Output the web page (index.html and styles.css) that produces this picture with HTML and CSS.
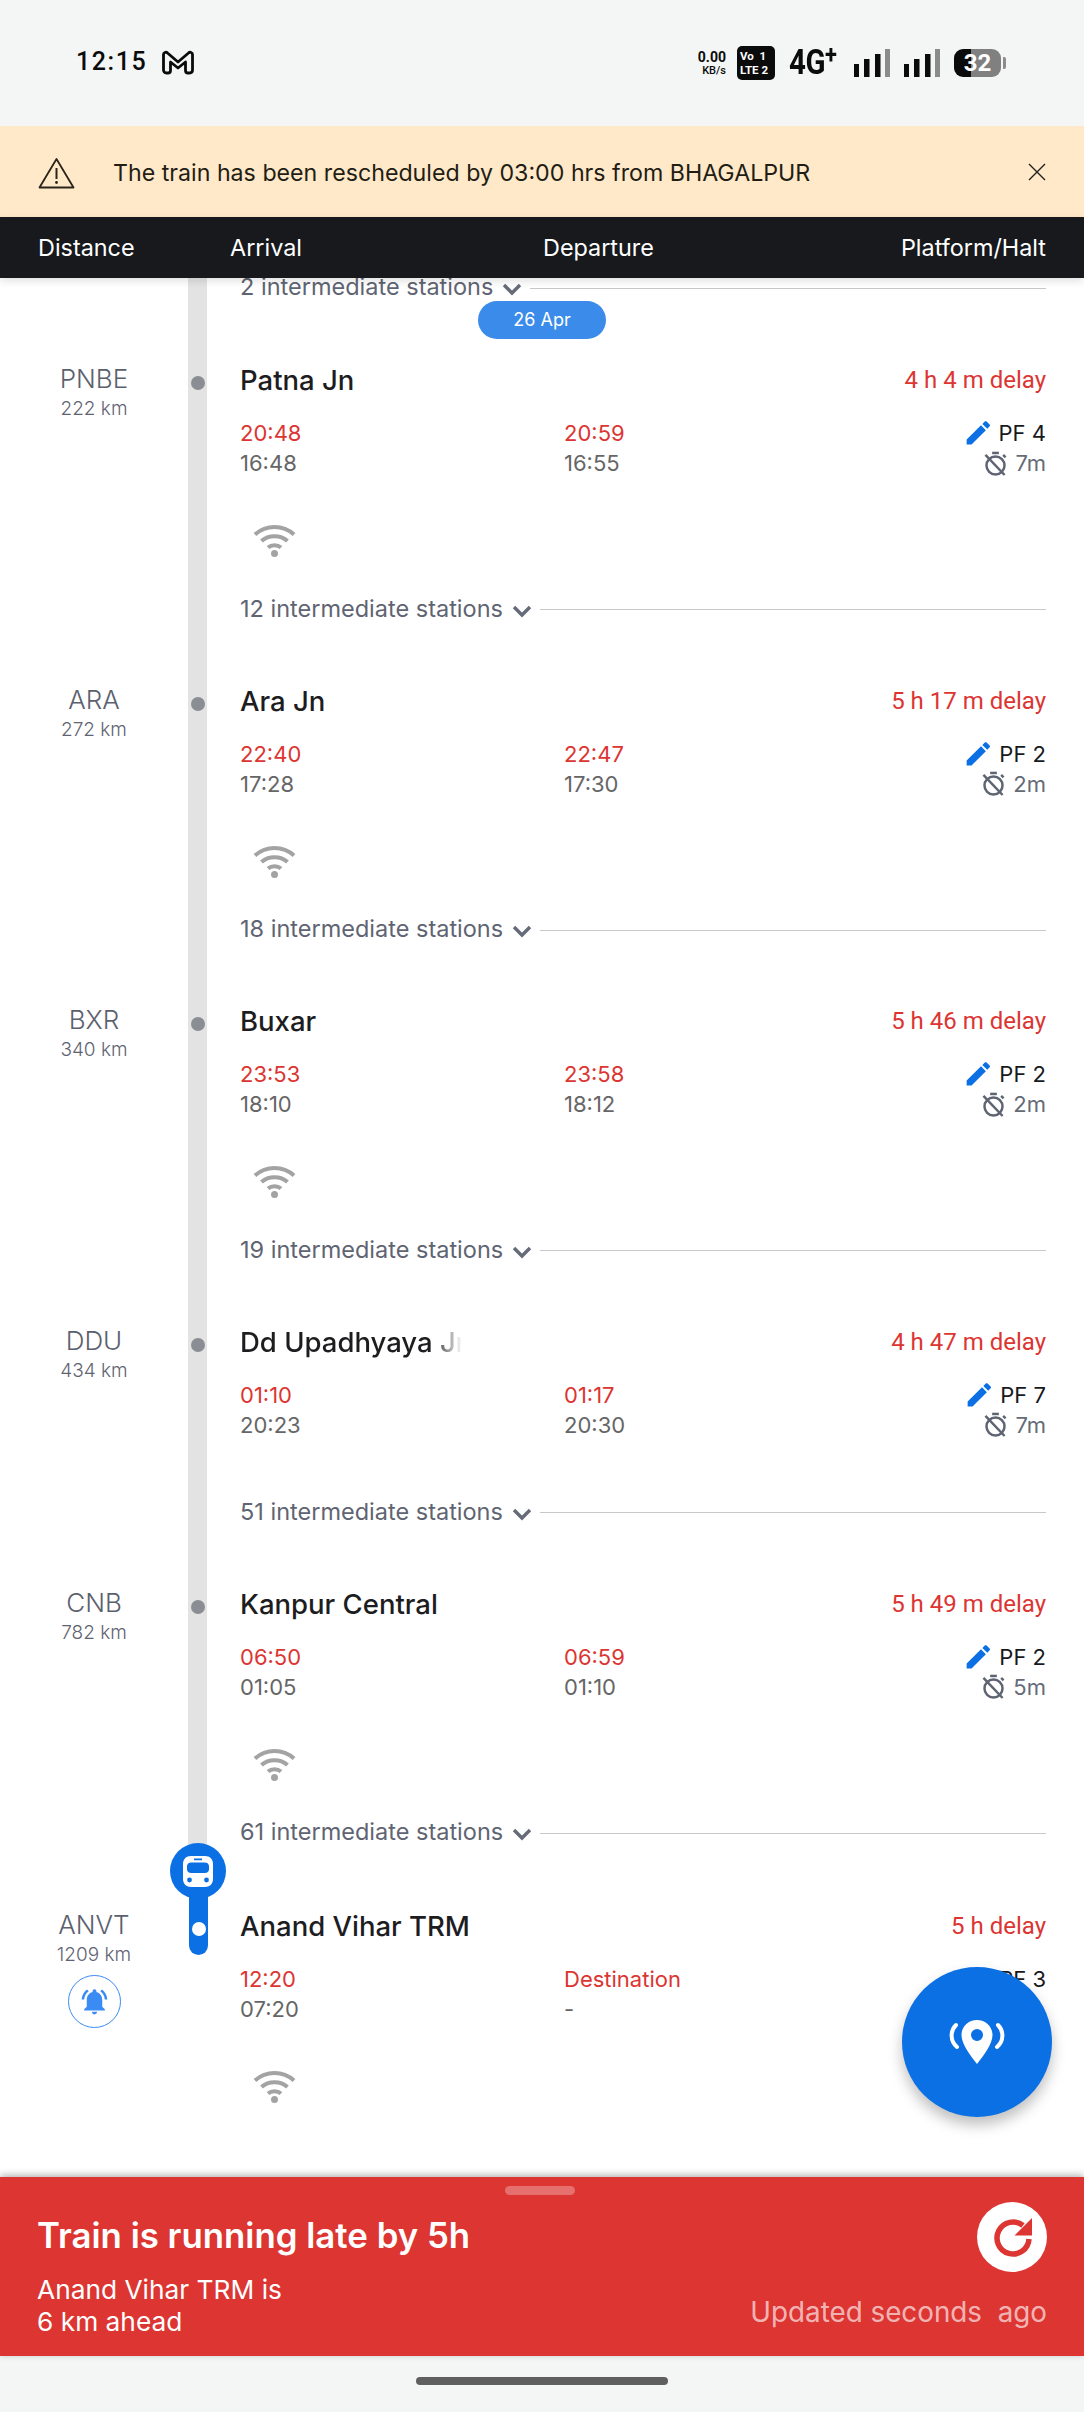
FILE: index.html
```html
<!DOCTYPE html>
<html lang="en">
<head>
<meta charset="utf-8">
<title>Train running status</title>
<link rel="stylesheet" href="styles.css">
</head>
<body>
<div class="app">
  <svg width="0" height="0" class="defs" aria-hidden="true">
    <defs>
      <symbol id="wifi" viewBox="0 0 43 33">
        <g fill="none" stroke="#a3a3a3" stroke-width="4">
          <path d="M2 10.5C13 0.5 30 0.5 41 10.5"/>
          <path d="M8.5 17C15.5 10.5 27.5 10.5 34.5 17"/>
          <path d="M15 23.5C18.5 20.5 24.5 20.5 28 23.5"/>
        </g>
        <circle cx="21.5" cy="29.5" r="3.5" fill="#a3a3a3"/>
      </symbol>
      <symbol id="chev" viewBox="0 0 20 14">
        <path d="M2 3l8 8 8-8" fill="none" stroke="#666b78" stroke-width="3.4"/>
      </symbol>
      <symbol id="pencil" viewBox="2.5 2.9 18.5 18.5">
        <path fill="#0a70e4" d="M3 17.25V21h3.75L17.81 9.94l-3.75-3.75L3 17.25zM20.71 7.04c.39-.39.39-1.02 0-1.41l-2.34-2.34c-.39-.39-1.02-.39-1.41 0l-1.83 1.83 3.75 3.75 1.83-1.83z"/>
      </symbol>
      <symbol id="timer" viewBox="0 0 24 26">
        <g fill="none" stroke="#5f6472" stroke-width="2.6">
          <circle cx="12" cy="15" r="9.4"/>
          <path d="M8.5 2h7"/>
          <path d="M1.5 4l20 21"/>
          <path d="M20 4l2.5 2.5"/>
        </g>
      </symbol>
    </defs>
  </svg>

  <header class="status">
    <div class="status-left">
      <span class="clock">12:15</span>
      <svg class="gmail" viewBox="0 0 33 25" width="34" height="25"><path d="M2 4.5C2 2.5 4.5 1.500 6 3l10.500 9L27 3c1.500-1.500 4-.5 4 1.500V20c0 1.500-1 3-3 3h-1.500c-1.500 0-2.500-1-2.500-2.500V12l-7.500 6-7.500-6v8.500C9 22 8 23 6.500 23H5c-2 0-3-1.500-3-3z" fill="#f4f6f5" stroke="#0b0b0b" stroke-width="2.800" stroke-linejoin="round"/></svg>
    </div>
    <div class="status-right">
      <div class="speed"><span class="speed-num">0.00</span><span class="speed-unit">KB/s</span></div>
      <div class="volte"><span>Vo&nbsp;&nbsp;1</span><span>LTE 2</span></div>
      <div class="net">4G<sup class="net-plus">+</sup></div>
      <svg class="signal" viewBox="0 0 36 28" width="36" height="28"><path fill="#0b0b0b" d="M0 15h5v13H0zM10 10h5.500v18H10zM21 5h5.500v23H21z"/><path fill="#8b8b8b" d="M31 0h5v28h-5z"/></svg>
      <svg class="signal" viewBox="0 0 36 28" width="36" height="28"><path fill="#0b0b0b" d="M0 15h5v13H0zM10 10h5.500v18H10zM21 5h5.500v23H21z"/><path fill="#8b8b8b" d="M31 0h5v28h-5z"/></svg>
      <div class="battery"><span class="battery-num">32</span></div>
      <span class="battery-tip"></span>
    </div>
  </header>

  <div class="notice">
    <svg class="notice-warn" viewBox="0 0 37 32" width="37" height="32"><path d="M18.500 2L1.500 30.500h34z" fill="none" stroke="#2b2419" stroke-width="1.800" stroke-linejoin="round"/><path d="M18.500 11v11" stroke="#2b2419" stroke-width="2"/><circle cx="18.500" cy="25.500" r="1.400" fill="#2b2419"/></svg>
    <span class="notice-text">The train has been rescheduled by 03:00 hrs from BHAGALPUR</span>
    <svg class="notice-close" viewBox="0 0 18 18" width="18" height="18"><path d="M1 1l16 16M17 1L1 17" stroke="#222" stroke-width="1.400" fill="none"/></svg>
  </div>

  <div class="columns">
    <span class="col-distance">Distance</span>
    <span class="col-arrival">Arrival</span>
    <span class="col-departure">Departure</span>
    <span class="col-platform">Platform/Halt</span>
  </div>

  <main class="list">
    <div class="stop stop-head">
      <div class="code"></div>
      <div class="rail"></div>
      <div class="main">
        <div class="sep sep-first"><span>2 intermediate stations</span><svg class="chev"><use href="#chev"/></svg><i></i></div>
      </div>
      <span class="date-pill">26 Apr</span>
    </div>

    <div class="stop">
      <div class="code"><b>PNBE</b><small>222 km</small></div>
      <div class="rail"><i class="dot"></i></div>
      <div class="main">
        <div class="name-row"><span class="name">Patna Jn</span><span class="delay">4 h 4 m delay</span></div>
        <div class="times">
          <div class="t-col"><span class="late">20:48</span><span class="sched">16:48</span></div>
          <div class="t-col"><span class="late">20:59</span><span class="sched">16:55</span></div>
          <div class="pf"><span class="pf-line"><svg class="pencil"><use href="#pencil"/></svg>PF 4</span><span class="halt"><svg class="timer"><use href="#timer"/></svg>7m</span></div>
        </div>
        <svg class="wifi"><use href="#wifi"/></svg>
        <div class="sep"><span>12 intermediate stations</span><svg class="chev"><use href="#chev"/></svg><i></i></div>
      </div>
    </div>

    <div class="stop">
      <div class="code"><b>ARA</b><small>272 km</small></div>
      <div class="rail"><i class="dot"></i></div>
      <div class="main">
        <div class="name-row"><span class="name">Ara Jn</span><span class="delay">5 h 17 m delay</span></div>
        <div class="times">
          <div class="t-col"><span class="late">22:40</span><span class="sched">17:28</span></div>
          <div class="t-col"><span class="late">22:47</span><span class="sched">17:30</span></div>
          <div class="pf"><span class="pf-line"><svg class="pencil"><use href="#pencil"/></svg>PF 2</span><span class="halt"><svg class="timer"><use href="#timer"/></svg>2m</span></div>
        </div>
        <svg class="wifi"><use href="#wifi"/></svg>
        <div class="sep"><span>18 intermediate stations</span><svg class="chev"><use href="#chev"/></svg><i></i></div>
      </div>
    </div>

    <div class="stop">
      <div class="code"><b>BXR</b><small>340 km</small></div>
      <div class="rail"><i class="dot"></i></div>
      <div class="main">
        <div class="name-row"><span class="name">Buxar</span><span class="delay">5 h 46 m delay</span></div>
        <div class="times">
          <div class="t-col"><span class="late">23:53</span><span class="sched">18:10</span></div>
          <div class="t-col"><span class="late">23:58</span><span class="sched">18:12</span></div>
          <div class="pf"><span class="pf-line"><svg class="pencil"><use href="#pencil"/></svg>PF 2</span><span class="halt"><svg class="timer"><use href="#timer"/></svg>2m</span></div>
        </div>
        <svg class="wifi"><use href="#wifi"/></svg>
        <div class="sep"><span>19 intermediate stations</span><svg class="chev"><use href="#chev"/></svg><i></i></div>
      </div>
    </div>

    <div class="stop">
      <div class="code"><b>DDU</b><small>434 km</small></div>
      <div class="rail"><i class="dot"></i></div>
      <div class="main">
        <div class="name-row"><span class="name name-fade">Dd Upadhyaya Jn</span><span class="delay">4 h 47 m delay</span></div>
        <div class="times">
          <div class="t-col"><span class="late">01:10</span><span class="sched">20:23</span></div>
          <div class="t-col"><span class="late">01:17</span><span class="sched">20:30</span></div>
          <div class="pf"><span class="pf-line"><svg class="pencil"><use href="#pencil"/></svg>PF 7</span><span class="halt"><svg class="timer"><use href="#timer"/></svg>7m</span></div>
        </div>
        <div class="sep sep-nowifi"><span>51 intermediate stations</span><svg class="chev"><use href="#chev"/></svg><i></i></div>
      </div>
    </div>

    <div class="stop">
      <div class="code"><b>CNB</b><small>782 km</small></div>
      <div class="rail"><i class="dot"></i></div>
      <div class="main">
        <div class="name-row"><span class="name">Kanpur Central</span><span class="delay">5 h 49 m delay</span></div>
        <div class="times">
          <div class="t-col"><span class="late">06:50</span><span class="sched">01:05</span></div>
          <div class="t-col"><span class="late">06:59</span><span class="sched">01:10</span></div>
          <div class="pf"><span class="pf-line"><svg class="pencil"><use href="#pencil"/></svg>PF 2</span><span class="halt"><svg class="timer"><use href="#timer"/></svg>5m</span></div>
        </div>
        <svg class="wifi"><use href="#wifi"/></svg>
        <div class="sep"><span>61 intermediate stations</span><svg class="chev"><use href="#chev"/></svg><i></i></div>
      </div>
    </div>

    <div class="stop stop-last">
      <div class="code">
        <b>ANVT</b><small>1209 km</small>
        <span class="alarm"><svg viewBox="0 0 24 24" width="31" height="31"><path fill="#3b8bf5" d="M7.580 4.080 6.150 2.650C3.750 4.480 2.170 7.300 2.030 10.500h2c.15-2.650 1.510-4.970 3.550-6.420zm12.390 6.420h2c-.15-3.200-1.730-6.020-4.120-7.850l-1.420 1.430c2.020 1.450 3.390 3.770 3.540 6.420zM18 11c0-3.070-1.640-5.640-4.500-6.320V4c0-.83-.67-1.500-1.500-1.500s-1.500.67-1.500 1.500v.68C7.630 5.360 6 7.920 6 11v5l-2 2v1h16v-1l-2-2v-5zm-6 11c.14 0 .27-.01.4-.04.65-.14 1.180-.58 1.440-1.180.1-.24.15-.5.15-.78h-4c.01 1.100.9 2 2.010 2z"/></svg></span>
      </div>
      <div class="rail rail-end">
        <div class="marker">
          <span class="marker-head"><svg viewBox="0 0 30 31" width="30" height="31"><path fill="#fff" d="M8 0h14c5 0 8 3.500 8 8v15c0 5-3.500 8-8 8H8c-4.500 0-8-3-8-8V8C0 3.500 3 0 8 0z"/><path fill="#0a70e4" d="M11 2.500h8v1.800h-8zM8.500 6.500h13c3 0 4.500 1.500 4.500 4v2.500c0 2.500-1.500 4-4.500 4h-13C5.500 17 4 15.500 4 13v-2.500c0-2.500 1.500-4 4.500-4z"/><circle cx="6.500" cy="24" r="2.400" fill="#0a70e4"/><circle cx="23.500" cy="24" r="2.400" fill="#0a70e4"/></svg></span>
          <span class="marker-stem"><i class="dot dot-white"></i></span>
        </div>
      </div>
      <div class="main">
        <div class="name-row"><span class="name">Anand Vihar TRM</span><span class="delay">5 h delay</span></div>
        <div class="times">
          <div class="t-col"><span class="late">12:20</span><span class="sched">07:20</span></div>
          <div class="t-col"><span class="late">Destination</span><span class="sched">-</span></div>
          <div class="pf"><span class="pf-line">PF 3</span></div>
        </div>
        <svg class="wifi"><use href="#wifi"/></svg>
      </div>
    </div>

    <button class="fab" type="button" aria-label="Live location">
      <svg viewBox="0 0 58 44" width="58" height="44"><path fill="#fff" fill-rule="evenodd" d="M29 0c8.500 0 15.500 6.500 15.500 15 0 9-8.500 20-15.500 29-7-9-15.500-20-15.500-29C13.500 6.500 20.500 0 29 0zm0 9a6 6 0 1 0 0 12 6 6 0 0 0 0-12z"/><path fill="none" stroke="#fff" stroke-width="4" stroke-linecap="round" d="M8 5C2 11 2 21 9 27M50 5c6 6 6 16-1 22"/></svg>
    </button>
  </main>

  <section class="sheet">
    <span class="handle"></span>
    <div class="sheet-body">
      <div class="sheet-left">
        <h1 class="sheet-title">Train is running late by 5h</h1>
        <p class="sheet-sub">Anand Vihar TRM is<br>6 km ahead</p>
      </div>
      <div class="sheet-right">
        <span class="refresh"><svg viewBox="0 0 70 70" width="70" height="70"><path fill="none" stroke="#dc3532" stroke-width="5.500" d="M46 23.500A16 16 0 1 0 52 37"/><path fill="#dc3532" d="M55 16v17.500H37.500z"/></svg></span>
        <span class="updated">Updated seconds&nbsp; ago</span>
      </div>
    </div>
  </section>

  <footer class="nav"><span class="home-bar"></span></footer>
</div>
</body>
</html>
```

FILE: styles.css
```css
* { box-sizing: border-box; }
html, body { margin: 0; padding: 0; background: #fff; }
.app {
  width: 1084px;
  height: 2412px;
  display: flex;
  flex-direction: column;
  overflow: hidden;
  font-family: "Inter", "Roboto", sans-serif;
  color: #17191d;
}
.defs { position: absolute; }

/* status bar */
.status {
  height: 126px;
  flex: none;
  background: #f4f6f5;
  display: flex;
  justify-content: space-between;
  padding: 46px 78px 0 76px;
  color: #0b0b0b;
}
.status-left { display: flex; align-items: flex-start; gap: 14px; }
.clock { font: 500 25px/32px "Roboto", sans-serif; letter-spacing: 1.6px; }
.gmail { margin-top: 4px; }
.status-right { display: flex; align-items: flex-start; }
.speed {
  display: flex;
  flex-direction: column;
  align-items: flex-end;
  font-family: "Roboto", sans-serif;
  margin: 4px 11px 0 0;
}
.speed-num { font-size: 14px; line-height: 14px; font-weight: 700; }
.speed-unit { font-size: 11px; line-height: 14px; font-weight: 500; }
.volte {
  width: 38px;
  height: 34px;
  background: #0b0b0b;
  color: #fff;
  border-radius: 5px;
  font: 700 11.500px/14px "Roboto", sans-serif;
  display: flex;
  flex-direction: column;
  justify-content: center;
  padding-left: 3px;
  white-space: nowrap;
}
.net {
  font: 700 35px/34px "Roboto", sans-serif;
  margin-left: 14px;
  width: 65px;
  transform: scaleX(.84);
  transform-origin: 0 50%;
  letter-spacing: -0.5px;
}
.net-plus { font-size: 26px; line-height: 0; vertical-align: 11px; }
.signal { margin: 3px 14px 0 0; }
.battery {
  width: 47px;
  height: 28px;
  margin-top: 3px;
  border-radius: 9px;
  background: linear-gradient(to right, #0b0b0b 17px, #808080 17px);
  color: #fff;
  text-align: center;
  font: 700 24px/28px "Roboto", sans-serif;
}
.battery-num { display: block; }
.battery-tip {
  width: 3px;
  height: 12px;
  margin: 11px 0 0 2px;
  background: #8b8b8b;
  border-radius: 0 2px 2px 0;
}

/* notice */
.notice {
  height: 91px;
  flex: none;
  background: #ffe9c9;
  display: flex;
  align-items: center;
  padding: 0 38px;
}
.notice-warn { margin-top: 3px; }
.notice-text { font: 400 23.200px/30px "Inter", sans-serif; margin: 2px 0 0 38px; flex: 1; color: #221d14; }
.notice-close { flex: none; }

/* column header */
.columns {
  height: 61px;
  flex: none;
  background: #17191d;
  color: #fff;
  display: flex;
  align-items: center;
  padding: 0 38px;
  font: 400 23.400px/30px "Inter", sans-serif;
  position: relative;
  z-index: 2;
  box-shadow: 0 3px 8px rgba(0,0,0,.12);
}
.col-distance { width: 192px; }
.col-arrival { width: 313px; }
.col-departure { flex: 1; }

/* list */
.list {
  flex: 1;
  background: #fff;
  overflow: hidden;
  position: relative;
  display: flex;
  flex-direction: column;
}
.stop {
  display: grid;
  grid-template-columns: 188px 19px 1fr;
  position: relative;
}
.stop-head { height: 31px; }
.code {
  display: flex;
  flex-direction: column;
  align-items: center;
  padding-top: 53px;
  font-family: "Inter", sans-serif;
  color: #5b606e;
}
.code b { font-size: 26px; font-weight: 300; line-height: 34px; }
.code small { font-size: 19px; font-weight: 300; line-height: 26px; color: #5f6472; }
.rail { background: #e3e3e3; position: relative; }
.dot {
  position: absolute;
  left: 3px;
  top: 67px;
  width: 14px;
  height: 14px;
  border-radius: 50%;
  background: #8a8d93;
}
.main { padding: 0 38px 0 33px; min-width: 0; }
.name-row {
  display: flex;
  justify-content: space-between;
  align-items: center;
  height: 40px;
  margin-top: 51px;
}
.name { font: 500 27.500px/40px "Inter", sans-serif; color: #1d1d1f; white-space: nowrap; }
.name-fade {
  width: 222px;
  overflow: hidden;
  -webkit-mask-image: linear-gradient(to right, #000 86%, transparent 100%);
  mask-image: linear-gradient(to right, #000 86%, transparent 100%);
}
.delay { font: 400 24px/40px "Roboto", sans-serif; color: #dc3532; }
.times {
  display: grid;
  grid-template-columns: 324px 1fr auto;
  margin-top: 18px;
  font: 400 22px/30px "Inter", sans-serif;
}
.t-col { display: flex; flex-direction: column; }
.late { color: #dc3532; }
.sched { color: #666666; }
.pf { display: flex; flex-direction: column; align-items: flex-end; }
.pf-line, .halt { display: flex; align-items: center; height: 30px; }
.pf-line { color: #17191d; }
.halt { color: #666b78; }
.pencil { width: 24px; height: 24px; margin-right: 9px; }
.timer { width: 23px; height: 25px; margin-right: 8px; }
.wifi { display: block; width: 43px; height: 33px; margin: 46px 0 0 13px; }
.sep {
  display: flex;
  align-items: center;
  height: 40px;
  padding-bottom: 2px;
  margin-top: 32.500px;
  color: #5f6472;
  font: 400 23.500px/38px "Inter", sans-serif;
  white-space: nowrap;
}
.sep-nowifi { margin-top: 53px; }
.sep-first { margin-top: 0; height: 18px; padding-bottom: 0; line-height: 18px; }
.sep i { flex: 1; height: 1px; background: #c8c8cc; margin-left: 8px; margin-top: 2px; }
.chev { width: 20px; height: 14px; margin: 4px 0 0 9px; flex: none; }
.date-pill {
  position: absolute;
  left: 478px;
  top: 23px;
  width: 128px;
  height: 38px;
  border-radius: 19px;
  background: #3b8bea;
  color: #fff;
  font: 400 18px/38px "Inter", sans-serif;
  text-align: center;
  z-index: 1;
}
.stop-last { flex: 1; margin-top: 2px; }
.rail-end { background: transparent; }
.marker {
  position: absolute;
  left: -18px;
  top: -12px;
  width: 56px;
  display: flex;
  flex-direction: column;
  align-items: center;
}
.marker-head {
  width: 56px;
  height: 56px;
  border-radius: 50%;
  background: #0a70e4;
  display: flex;
  align-items: center;
  justify-content: center;
}
.marker-stem {
  width: 19px;
  height: 58px;
  margin-top: -2px;
  background: #0a70e4;
  border-radius: 0 0 10px 10px;
  position: relative;
  display: block;
}
.dot-white { background: #fff; left: 3px; top: 25px; }
.alarm {
  width: 53px;
  height: 53px;
  margin-top: 7px;
  border: 1.500px solid #3b8bf5;
  border-radius: 50%;
  display: flex;
  align-items: center;
  justify-content: center;
}
.fab {
  position: absolute;
  left: 902px;
  top: 1689px;
  width: 150px;
  height: 150px;
  border: 0;
  padding: 0;
  border-radius: 50%;
  background: #0a70e4;
  box-shadow: 0 8px 14px rgba(0,0,0,.25);
  display: flex;
  align-items: center;
  justify-content: center;
}

/* bottom sheet */
.sheet {
  height: 179px;
  flex: none;
  background: #dc3532;
  color: #fff;
  position: relative;
  box-shadow: 0 -2px 7px rgba(0,0,0,.3);
}
.handle {
  position: absolute;
  left: 505px;
  top: 9px;
  width: 70px;
  height: 9px;
  border-radius: 5px;
  background: #e5706d;
}
.sheet-body {
  display: flex;
  justify-content: space-between;
  padding: 0 37px 0 37px;
}
.sheet-title { margin: 38px 0 0; font: 600 34.800px/40px "Inter", sans-serif; }
.sheet-sub { margin: 19px 0 0; font: 400 26.300px/32px "Inter", sans-serif; }
.sheet-right { display: flex; flex-direction: column; align-items: flex-end; padding-top: 25px; }
.refresh {
  width: 70px;
  height: 70px;
  border-radius: 50%;
  background: #fff;
  display: block;
}
.refresh svg { display: block; }
.updated { margin-top: 24px; font: 400 27.800px/32px "Inter", sans-serif; color: rgba(255,255,255,.65); white-space: nowrap; }

/* nav */
.nav {
  height: 56px;
  flex: none;
  background: #f4f6f5;
  display: flex;
  justify-content: center;
  padding-top: 21px;
}
.home-bar { width: 252px; height: 8px; border-radius: 4px; background: #5f5f5f; }
```
